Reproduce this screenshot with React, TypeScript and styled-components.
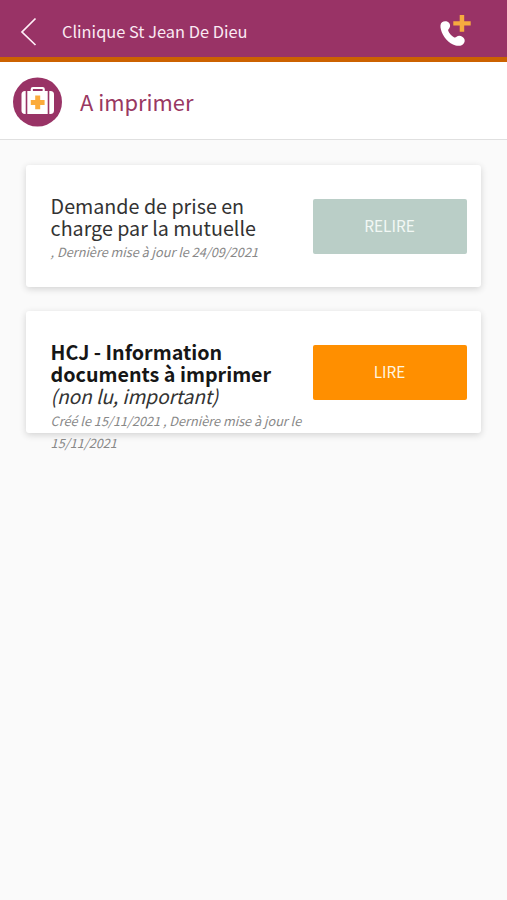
import React from "react";
import styled, { createGlobalStyle } from "styled-components";

const GlobalStyle = createGlobalStyle`
  * { box-sizing: border-box; }
  body {
    margin: 0;
    background: #fafafa;
    font-family: "Noto Sans CJK SC", "Noto Sans", sans-serif;
  }
`;

const Screen = styled.div`
  min-height: 900px;
  display: flex;
  flex-direction: column;
  background: #fafafa;
`;

const TopBar = styled.header`
  height: 62px;
  display: flex;
  align-items: center;
  background: #993366;
  border-bottom: 5px solid #cc6200;
  padding: 5px 36px 0 20px;
`;

const BackButton = styled.button`
  width: 42px;
  height: 30px;
  padding: 0;
  border: 0;
  background: none;
  text-align: left;
  svg { display: block; }
`;

const Clinic = styled.h1`
  flex: 1;
  margin: 0;
  font-size: 16.4px;
  line-height: 24px;
  font-weight: 400;
  color: #fbeaf3;
  white-space: nowrap;
`;

const CallButton = styled.button`
  width: 31px;
  height: 32px;
  padding: 0;
  border: 0;
  background: none;
  svg { display: block; }
`;

const SectionBar = styled.section`
  height: 78px;
  display: flex;
  align-items: center;
  gap: 18px;
  padding: 3px 13px 0;
  background: #fff;
  border-bottom: 1px solid #e0e0e0;
`;

const SectionTitle = styled.h2`
  margin: 0;
  font-size: 21.9px;
  line-height: 32px;
  font-weight: 400;
  color: #993862;
`;

const List = styled.main`
  display: flex;
  flex-direction: column;
  gap: 24.5px;
  padding: 24.5px 26px;
`;

const Card = styled.article`
  height: 122px;
  display: flex;
  align-items: flex-start;
  justify-content: space-between;
  padding: 0 14.5px 0 24.6px;
  background: #fff;
  border-radius: 3px;
  box-shadow: 0 2px 7px rgba(0, 0, 0, 0.16);
`;

const Summary = styled.div`
  width: 255px;
  padding-top: 30px;
  white-space: nowrap;
`;

const Title = styled.h3<{ $unread?: boolean }>`
  margin: 0;
  font-size: 19.7px;
  line-height: 22px;
  font-weight: ${(p) => (p.$unread ? 700 : 400)};
  color: ${(p) => (p.$unread ? "#161616" : "#333")};
`;

const Line = styled.span`
  display: block;
`;

const Status = styled.em`
  display: block;
  font-size: 19.2px;
  line-height: 22px;
  font-weight: 400;
  letter-spacing: -0.1px;
  color: #333;
`;

const Dates = styled.p`
  margin: 2.8px 0 0;
  font-size: 12.7px;
  line-height: 22px;
  font-style: italic;
  color: #888;
`;

const Action = styled.button<{ $unread?: boolean }>`
  width: 154px;
  height: 55px;
  margin-top: 34px;
  padding: 0 0 2.4px;
  border: 0;
  border-radius: 2px;
  background: ${(p) => (p.$unread ? "#ff8f00" : "#bacec7")};
  color: ${(p) => (p.$unread ? "#fff3df" : "#f2f8f5")};
  font-family: inherit;
  font-size: 15.4px;
  line-height: 24px;
`;

const BackIcon = () => (
  <svg width="18" height="30" viewBox="0 0 18 30" fill="none">
    <path d="M15.500 2.500 2 16 15.500 29" stroke="#fff0f8" strokeWidth="1.700" />
  </svg>
);

const CallIcon = () => (
  <svg width="31" height="32" viewBox="0 0 31 32">
    <path
      d="M2 7.200C4 5.900 7 6 8.700 7.600c1.600 1.600 1.900 4.100.6 5.700-.8 1-1.400 1.700-1 2.800.9 2.300 3.200 4.800 5.600 6.100 1.200.6 2-.1 3-.8 1.500-1 4-.7 5.700.5 1.800 1.300 2.600 3.200 1.900 5-1.200 3.100-4.600 4.700-8.900 3.600C8.600 28.700 2.800 21.700.9 14.500.1 11.400.2 8.600 2 7.200Z"
      fill="#fff"
    />
    <path d="M19.700 0h4.500v6.200h6.500v4.400h-6.500v6.200h-4.500v-6.200h-6.400V6.200h6.400Z" fill="#f6ab3f" />
  </svg>
);

const KitIcon = () => (
  <svg width="49" height="50" viewBox="0 0 49 50">
    <circle cx="24.500" cy="25" r="24.500" fill="#993366" />
    <path d="M18.800 14.500v-2.400q0-1.100 1.100-1.100h9.700q1.100 0 1.100 1.100v2.400" fill="none" stroke="#fff" strokeWidth="2.200" />
    <path d="M12.700 14V37h-.8Q8.500 37 8.500 33.600V17.500q0-3.500 3.400-3.500Z" fill="#fff" />
    <path d="M14.300 14h20.400V37H14.300Z" fill="#fff" />
    <path d="M36.300 14h1.200q3.500 0 3.500 3.500v16.100q0 3.400-3.500 3.400h-1.200Z" fill="#fff" />
    <path d="M22.200 18.500h5v4.400h4.400v5h-4.400v4.400h-5v-4.400h-4.400v-5h4.400Z" fill="#fbab3c" />
  </svg>
);

export default function App() {
  return (
    <Screen>
      <GlobalStyle />
      <TopBar>
        <BackButton aria-label="Retour"><BackIcon /></BackButton>
        <Clinic>Clinique St Jean De Dieu</Clinic>
        <CallButton aria-label="Appeler"><CallIcon /></CallButton>
      </TopBar>
      <SectionBar>
        <KitIcon />
        <SectionTitle>A imprimer</SectionTitle>
      </SectionBar>
      <List>
        <Card>
          <Summary>
            <Title>
              <Line>Demande de prise en</Line>
              <Line>charge par la mutuelle</Line>
            </Title>
            <Dates><Line>, Dernière mise à jour le 24/09/2021</Line></Dates>
          </Summary>
          <Action>RELIRE</Action>
        </Card>
        <Card>
          <Summary>
            <Title $unread>
              <Line>HCJ - Information</Line>
              <Line>documents à imprimer</Line>
            </Title>
            <Status>(non lu, important)</Status>
            <Dates>
              <Line>Créé le 15/11/2021 , Dernière mise à jour le</Line>
              <Line>15/11/2021</Line>
            </Dates>
          </Summary>
          <Action $unread>LIRE</Action>
        </Card>
      </List>
    </Screen>
  );
}
